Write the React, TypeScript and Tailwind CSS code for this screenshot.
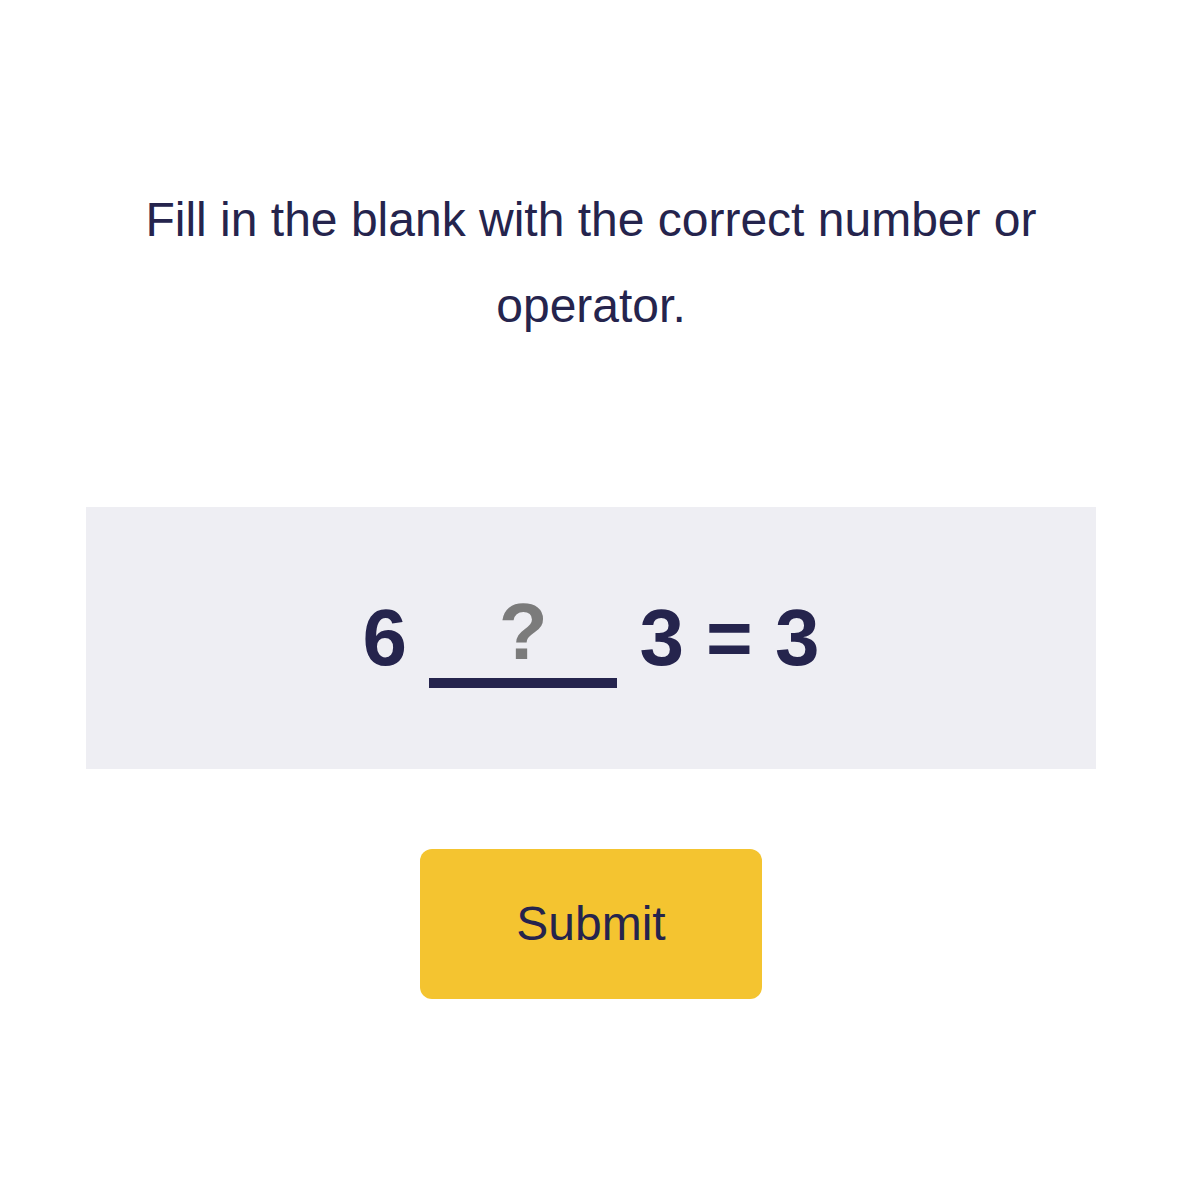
import React from 'react';

const App: React.FC = () => {
  return (
    <div className="min-h-screen bg-white font-['Liberation_Sans',Arial,sans-serif] text-[#25244d]">
      <div className="ml-[86px] w-[1010px] pt-[177px] flex flex-col items-center">
        {/* Prompt */}
        <p className="text-[48px] leading-[86px] text-center">
          Fill in the blank with the correct number or operator.
        </p>

        {/* Equation */}
        <div className="mt-[158px] w-full bg-[#eeeef3] pt-[91px] pb-[81px] flex justify-center">
          <div className="text-[80px] font-bold leading-none whitespace-pre">
            <span>6 </span>
            <span className="inline-block w-[188px] border-b-[10px] border-[#25244d] text-center text-[#7b7b7b]">
              <span className="relative bottom-[6px]">?</span>
            </span>
            <span> 3 = 3</span>
          </div>
        </div>

        {/* Submit */}
        <button className="mt-[80px] w-[342px] h-[150px] rounded-xl bg-[#f4c430] text-[48px] text-[#25244d]">
          Submit
        </button>
      </div>
    </div>
  );
};

export default App;
